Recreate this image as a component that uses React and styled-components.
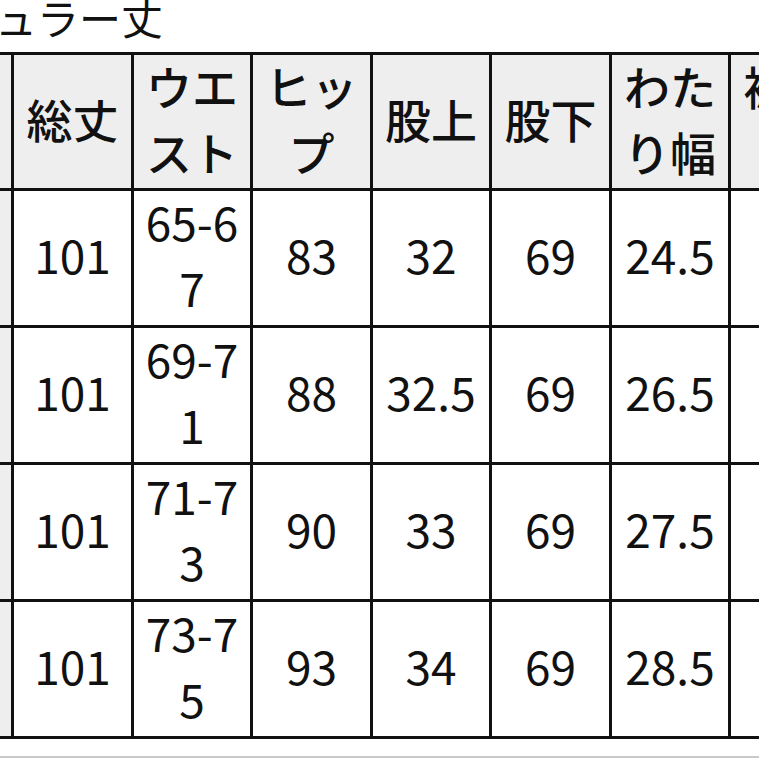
import React from 'react'
import styled, { createGlobalStyle } from 'styled-components'

const GlobalStyle = createGlobalStyle`
  html, body {
    margin: 0;
    padding: 0;
    background: #fff;
    overflow: hidden;
  }
  body {
    font-family: "Noto Sans CJK JP", "Noto Sans", sans-serif;
    color: #111;
  }
`

const columns = ['サイズ', '総丈', 'ウエスト', 'ヒップ', '股上', '股下', 'わたり幅', '裾周り']

const colWidths = [117, 117, 116, 117, 116, 117, 116, 117]

const sizeRows = [
  { size: 'S', length: '101', waist: '65-67', hip: '83', rise: '32', inseam: '69', thigh: '24.5', hem: '' },
  { size: 'M', length: '101', waist: '69-71', hip: '88', rise: '32.5', inseam: '69', thigh: '26.5', hem: '' },
  { size: 'L', length: '101', waist: '71-73', hip: '90', rise: '33', inseam: '69', thigh: '27.5', hem: '' },
  { size: 'LL', length: '101', waist: '73-75', hip: '93', rise: '34', inseam: '69', thigh: '28.5', hem: '' },
]

const Page = styled.div`
  width: 759px;
  height: 759px;
  overflow: hidden;
`

const Sheet = styled.div`
  margin-left: -109px;
  width: max-content;
`

const Title = styled.h2`
  margin: -4px 0 14px;
  padding-left: 20px;
  font-size: 42px;
  line-height: 1;
  font-weight: 400;
  white-space: nowrap;
`

const Grid = styled.div`
  display: grid;
  grid-template-columns: ${(p) => p.$widths.map((w) => `${w}px`).join(' ')};
  grid-template-rows: 133px repeat(${(p) => p.$rows}, 134px);
  gap: 3px;
  padding: 3px;
  background: #111;
`

const Cell = styled.div`
  display: flex;
  align-items: center;
  justify-content: center;
  padding: 0 4px 8px;
  text-align: center;
  font-size: 46px;
  line-height: 62px;
  word-break: break-all;
  font-weight: ${(p) => (p.$head ? 500 : 400)};
  background: ${(p) => (p.$shade ? '#eeeeee' : '#ffffff')};
`

const CellText = styled.span`
  display: block;
  line-height: 66px;
  margin: -4px 0;
`

const Divider = styled.div`
  margin-top: 17px;
  border-top: 2px solid #c9c9c9;
`

export default function App() {
  const keys = ['length', 'waist', 'hip', 'rise', 'inseam', 'thigh', 'hem']
  return (
    <Page>
      <GlobalStyle />
      <Sheet>
        <Title>レギュラー丈</Title>
        <Grid $widths={colWidths} $rows={sizeRows.length}>
          {columns.map((c) => (
            <Cell key={c} $head $shade>
              <CellText>{c}</CellText>
            </Cell>
          ))}
          {sizeRows.map((row) => (
            <React.Fragment key={row.size}>
              <Cell $head $shade>
                <CellText>{row.size}</CellText>
              </Cell>
              {keys.map((k) => (
                <Cell key={k}>
                  <CellText>{row[k]}</CellText>
                </Cell>
              ))}
            </React.Fragment>
          ))}
        </Grid>
        <Divider />
      </Sheet>
    </Page>
  )
}
